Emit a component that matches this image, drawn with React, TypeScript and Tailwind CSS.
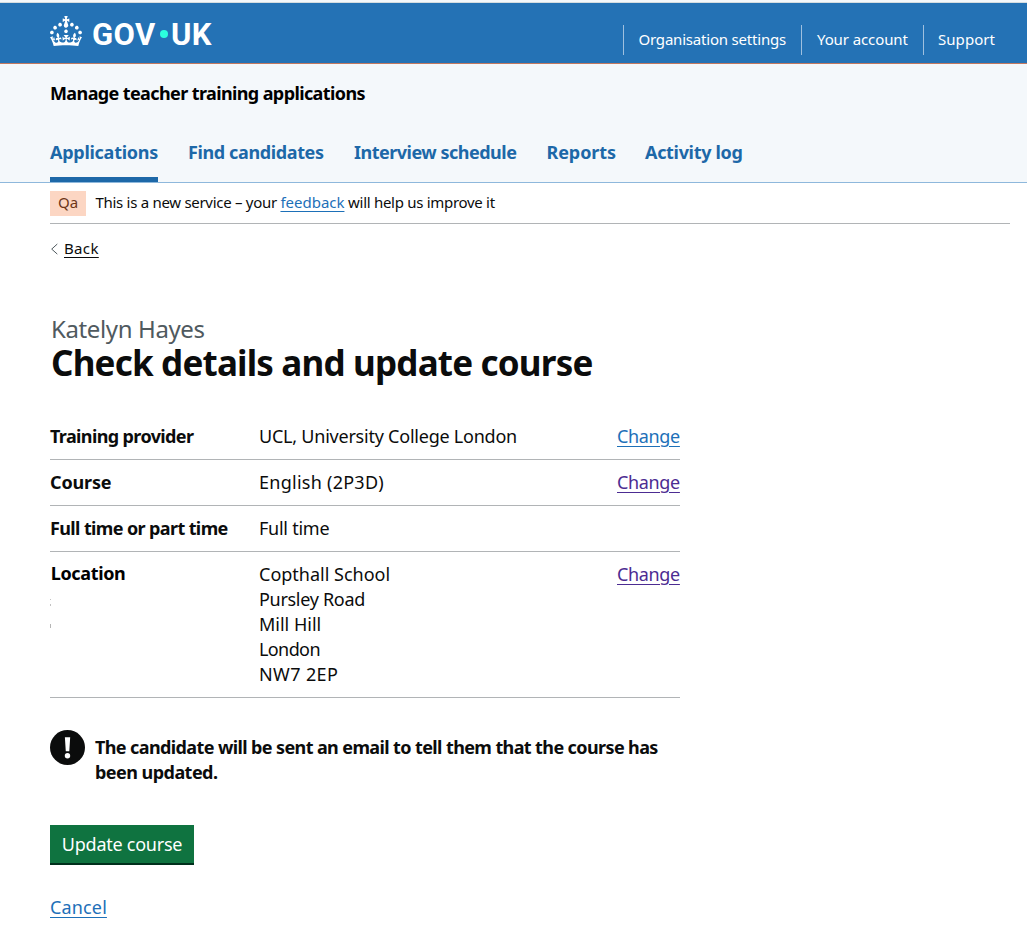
import type { ReactNode } from 'react';

const navItems = [
  { label: 'Applications', width: 'w-[108px]', tracking: 'tracking-[-0.27px]', active: true },
  { label: 'Find candidates', width: 'w-[136px]', tracking: 'tracking-[-0.38px]', active: false },
  { label: 'Interview schedule', width: 'w-[162.5px]', tracking: 'tracking-[-0.5px]', active: false },
  { label: 'Reports', width: 'w-[68.5px]', tracking: 'tracking-[-0.1px]', active: false },
  { label: 'Activity log', width: 'w-[98px]', tracking: 'tracking-[-0.32px]', active: false },
];

function Crown() {
  return (
    <svg className="mt-[13px] h-[30px] w-8 fill-white" viewBox="0 0 32 30" aria-hidden="true">
      <path d="M22.6 10.4c-1 .4-2-.1-2.4-1-.4-.9.1-2 1-2.4.9-.4 2 .1 2.4 1s-.1 2-1 2.4m-5.9 6.7c-.9.4-2-.1-2.4-1-.4-.9.1-2 1-2.4.9-.4 2 .1 2.4 1s-.1 2-1 2.4m10.8-3.7c-1 .4-2-.1-2.4-1-.4-.9.1-2 1-2.4.9-.4 2 .1 2.4 1s0 2-1 2.4m3.3 4.8c-1 .4-2-.1-2.4-1-.4-.9.1-2 1-2.4.9-.4 2 .1 2.4 1s-.1 2-1 2.4M17 4.7l2.3 1.2V2.5l-2.3.7-.2-.2.9-3h-3.4l.9 3-.2.2c-.1.1-2.3-.7-2.3-.7v3.4L15 4.7c.1.1.1.2.2.2l-1.3 4c-.1.2-.1.4-.1.6 0 1.1.8 2 1.9 2.2h.7c1-.2 1.9-1.1 1.9-2.1 0-.2 0-.4-.1-.6l-1.3-4c-.1-.2 0-.2.1-.3m-7.6 5.7c.9.4 2-.1 2.4-1 .4-.9-.1-2-1-2.4-.9-.4-2 .1-2.4 1s0 2 1 2.4m-5 3c.9.4 2-.1 2.4-1 .4-.9-.1-2-1-2.4-.9-.4-2 .1-2.4 1s.1 2 1 2.4m-3.2 4.8c.9.4 2-.1 2.4-1 .4-.9-.1-2-1-2.4-.9-.4-2 .1-2.4 1s0 2 1 2.4m14.8 11c4.4 0 8.6.3 12.3.8 1.1-4.5 2.4-7 3.7-8.8l-2.5-.9c.2 1.3.3 1.9 0 2.7-.4-.4-.8-1.1-1.1-2.3l-1.2 4c.7-.5 1.3-.8 2-.9-1.1 2.5-2.6 3.1-3.5 3-1.1-.2-1.7-1.2-1.5-2.1.3-1.2 1.5-1.5 2.1-.1 1.1-2.3-.8-3-2-2.3 1.9-1.9 2.1-3.5.6-5.6-2.1 1.6-2.1 3.2-1.2 5.5-1.2-1.4-3.2-.6-2.5 1.6.9-1.4 2.1-.5 1.9.8-.2 1.1-1.7 2.1-3.5 1.9-2.7-.2-2.9-2.1-2.9-3.6.7-.1 1.9.5 2.9 1.9l.4-4.3c-1.1 1.1-2.1 1.4-3.2 1.4.4-1.2 2.1-3 2.1-3h-5.4s1.7 1.9 2.1 3c-1.1 0-2.1-.2-3.2-1.4l.4 4.3c1-1.4 2.2-2 2.9-1.9-.1 1.5-.2 3.4-2.9 3.6-1.9.2-3.4-.8-3.5-1.9-.2-1.3 1-2.2 1.9-.8.7-2.3-1.2-3-2.5-1.6.9-2.2.9-3.9-1.2-5.5-1.5 2-1.3 3.7.6 5.6-1.2-.7-3.1 0-2 2.3.6-1.4 1.8-1.1 2.1.1.2.9-.3 1.9-1.5 2.1-.9.2-2.4-.5-3.5-3 .6 0 1.2.3 2 .9l-1.2-4c-.3 1.1-.7 1.9-1.1 2.3-.3-.8-.2-1.4 0-2.7l-2.9.9C1.3 23 2.6 25.5 3.7 30c3.7-.5 7.9-.8 12.3-.8" />
    </svg>
  );
}

function SummaryRow({ label, labelClass, change, children }: { label: ReactNode; labelClass: string; change?: string; children: ReactNode }) {
  return (
    <div className="flex border-b border-[#b1b4b6] py-[10px] text-[18px] leading-[25px]">
      <dt className={`w-[209px] shrink-0 font-bold ${labelClass}`}>{label}</dt>
      <dd className="grow">{children}</dd>
      {change && (
        <dd className="flex w-[63px] shrink-0 items-start">
          <a href="#" className={`tracking-[-0.34px] underline decoration-1 underline-offset-[3px] ${change}`}>Change</a>
        </dd>
      )}
    </div>
  );
}

export default function App() {
  return (
    <div className="h-[935px] w-full overflow-hidden bg-white font-['Noto_Sans',sans-serif] text-[#0b0c0c]">
      <div className="h-[3px] border-b border-[#d5dde0] bg-[#f4f8fb]" />
      <header className="flex h-[61px] justify-between border-b border-[#c17961] bg-[#2472b5] pr-8 pl-[50px] text-white">
        <a href="#" className="flex items-start">
          <Crown />
          <span className="ml-[10px] flex items-center pt-[13px] font-['Roboto',sans-serif] text-[31px] leading-[37px] font-bold">
            <span className="w-[66px] tracking-[0.4px]">GOV</span>
            <span className="mx-[1.5px] mb-px size-2 rounded-full bg-[#2bffde]" />
            <span className="ml-[2px] tracking-[0.4px]">UK</span>
          </span>
        </a>
        <nav className="mt-[22px] flex h-[30px] text-[15px] leading-[28px] whitespace-nowrap">
          <a href="#" className="w-[178px] border-l border-[#9fc0df] pl-[14.5px] tracking-[-0.2px]">Organisation settings</a>
          <a href="#" className="w-[122px] border-l border-[#9fc0df] pl-[15px] tracking-[-0.1px]">Your account</a>
          <a href="#" className="w-[72px] border-l border-[#9fc0df] pl-[14px] tracking-[0.05px]">Support</a>
        </nav>
      </header>

      <section className="h-[119px] border-b border-[#8eb8dc] bg-[#f4f8fb] px-[50px] pt-[17px] font-bold">
        <p className="text-[18px] leading-[25px] tracking-[-0.61px] text-black">Manage teacher training applications</p>
        <nav className="mt-[34px] flex gap-[30px] text-[18px] leading-[25px] whitespace-nowrap text-[#1d68a8]">
          {navItems.map((item) => (
            <a key={item.label} href="#" className={`h-[42px] ${item.width} ${item.tracking} ${item.active ? 'border-b-[5px] border-[#1d68a8]' : ''}`}>
              {item.label}
            </a>
          ))}
        </nav>
      </section>

      <div className="mr-[17px] ml-[50px] flex h-[41px] items-start border-b border-[#b1b4b6] pt-2 text-[15px]">
        <span className="h-[25px] w-9 bg-[#fcd6c3] text-center leading-[22px] text-[#6e3619]">Qa</span>
        <p className="ml-[9.5px] leading-[22px] tracking-[-0.29px]">
          This is a new service – your{' '}
          <a href="#" className="tracking-[-0.02px] text-[#1d70b8] underline decoration-1 underline-offset-[3px]">feedback</a> will help us improve it
        </p>
      </div>

      <main className="pl-[50px]">
        <a href="#" className="mt-[13px] flex h-6 w-fit items-center text-[15px] leading-[22px]">
          <svg className="mr-[5px] h-[12px] w-[9px]" viewBox="0 0 9 12" fill="none" stroke="#505a5f" aria-hidden="true">
            <path d="M7.3 1 1.7 6.1l5.6 5" />
          </svg>
          <span className="mb-0.5 tracking-[0.35px] underline decoration-1 underline-offset-[3px]">Back</span>
        </a>

        <div className="mt-[53px] pl-px">
          <p className="text-[24px] leading-[30px] tracking-[-0.38px] text-[#505a5f]">Katelyn Hayes</p>
          <h1 className="mt-[-1px] text-[35px] leading-10 font-bold tracking-[-0.81px]">Check details and update course</h1>
        </div>

        <dl className="mt-[31px] w-[630px]">
          <SummaryRow label="Training provider" labelClass="tracking-[-0.62px]" change="text-[#1d70b8]">
            <span className="tracking-[-0.23px]">UCL, University College London</span>
          </SummaryRow>
          <SummaryRow label="Course" labelClass="tracking-[-0.16px]" change="text-[#4c2c92]">
            <span className="tracking-[0.26px]">English (2P3D)</span>
          </SummaryRow>
          <SummaryRow label="Full time or part time" labelClass="tracking-[-0.62px]">
            <span className="tracking-[-0.25px]">Full time</span>
          </SummaryRow>
          <SummaryRow
            label={
              <>
                <span className="-mt-px block pl-[0.75px] text-black">Location</span>
                <span className="mt-[13px] block h-[7px] w-px border-t border-b-2 border-[#c2c2c2]" />
                <span className="mt-[18px] block h-1 w-px bg-[#b5b5b5]" />
              </>
            }
            labelClass="tracking-[-0.36px]"
            change="text-[#4c2c92]"
          >
            <span className="block tracking-[0px]">Copthall School</span>
            <span className="block tracking-[-0.3px]">Pursley Road</span>
            <span className="block tracking-[0px]">Mill Hill</span>
            <span className="block tracking-[-0.6px]">London</span>
            <span className="block tracking-[0.38px]">NW7 2EP</span>
          </SummaryRow>
        </dl>

        <div className="mt-8 flex">
          <svg className="size-[35px] shrink-0" viewBox="0 0 35 35" aria-hidden="true">
            <circle cx="17.5" cy="17.5" r="17.5" fill="#0b0c0c" />
            <path d="M14.9 7.2h5.3l-.9 14h-3.5z" fill="white" />
            <circle cx="17.5" cy="25.7" r="2.7" fill="white" />
          </svg>
          <p className="mt-[5px] ml-[10px] text-[18px] leading-[25px] font-bold tracking-[-0.61px] whitespace-nowrap">
            The candidate will be sent an email to tell them that the course has
            <br />
            <span className="tracking-[-0.54px]">been updated.</span>
          </p>
        </div>

        <button className="mt-10 block h-10 w-36 border-b-2 border-[#00301c] bg-[#0f7340] text-[18px] leading-[38px] tracking-[-0.25px] text-white">Update course</button>
        <a href="#" className="mt-[30px] block w-fit text-[18px] leading-[25px] tracking-[0.15px] text-[#1d70b8] underline decoration-1 underline-offset-[3px]">Cancel</a>
      </main>
    </div>
  );
}
